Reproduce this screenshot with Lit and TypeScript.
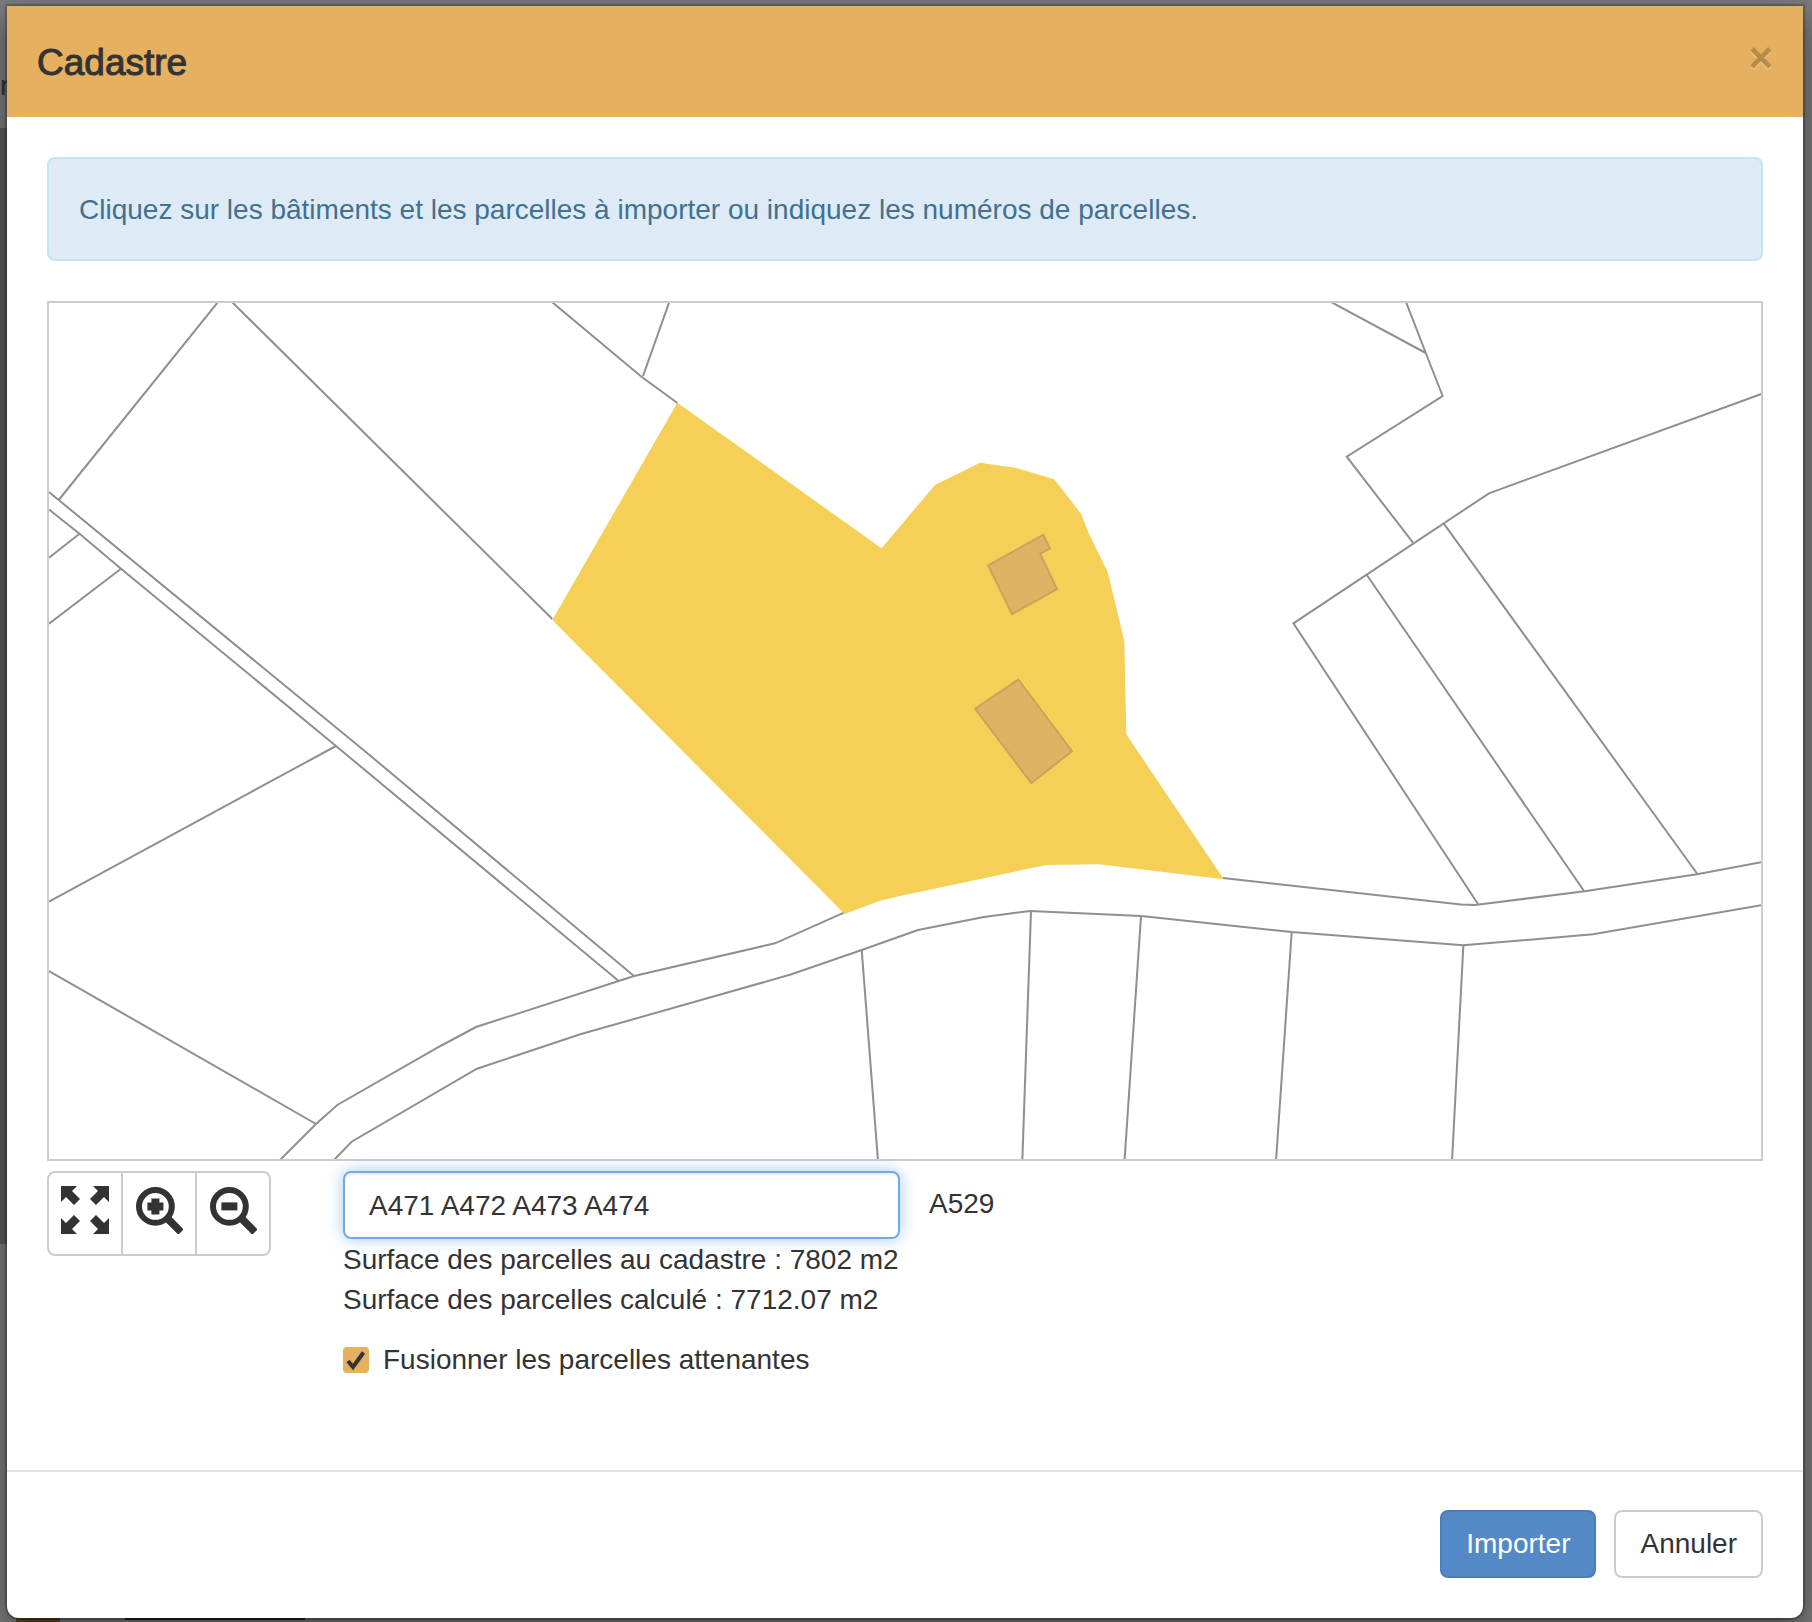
import { LitElement, html, svg, css } from "lit";
import { customElement, state } from "lit/decorators.js";

/** Parcel boundaries, in map units. */
const BOUNDARIES: string[] = [
  "218,301 58.7,499",
  "232,301 552.3,618",
  "552,301 641.8,376 677.4,402",
  "669.3,301 643,375",
  "49,491 58.7,499 364.7,750 634,975",
  "49,508.5 79.5,532.7 121,567.7 336,745 618.7,980",
  "79.5,532.7 49,556.7",
  "121,567.7 49,622.7",
  "336,745 49,900.7",
  "49,970 316,1123",
  "279,1160 316,1123 337.3,1104 440.5,1045 476,1026 618.7,980 634,975 775,942.3 844,911.7",
  "333,1160 351.6,1140.7 477,1067.7 580.3,1033.3 791.5,973.3 861.7,949 918,929 984,916 1030,910 1141.3,915 1291.7,931 1463,944.3 1593,933.3 1762,904",
  "861.7,949 878,1160",
  "1031,910 1022.3,1160",
  "1141,915 1124.5,1160",
  "1291.7,931 1276,1160",
  "1463.4,944 1452,1160",
  "1223,877 1461,903.5 1475,904 1584.6,890.3 1697,873.3 1762,861",
  "1478,903 1293.4,622.3 1489,492.3 1762,392.7",
  "1367,574.3 1584,890",
  "1443.8,522.7 1697.4,873",
  "1331,301 1425.8,352",
  "1406,301 1425.8,352 1442.6,395 1346.7,455.7 1413,541.7",
];

const SELECTED_PARCEL =
  "677.4,401.7 881.5,547.3 935,484 980,461.7 1015,466.7 1054.3,478.3 1081,512.7 1089,532.7 1107.7,571 1124.3,640 1126.3,733.3 1223.8,878.3 1099,863.3 1046,864 900,895 879.3,900 844.7,913 552.3,619";

const BUILDINGS: string[] = [
  "1043.3,533.8 1049.8,547.3 1040.2,553 1057,588 1012,613 988.2,564.3",
  "1018.3,678.5 1072,750.3 1031.3,782 975.2,707.7",
];

@customElement("parcel-map")
class ParcelMap extends LitElement {
  static styles = css`
    :host {
      display: block;
      border: 2px solid #ccc;
    }
    .map {
      display: block;
      width: 100%;
      height: auto;
    }
    .boundary {
      fill: none;
      stroke: #8f8f8f;
      stroke-width: 2;
    }
    .parcel {
      fill: #f6cf57;
    }
    .building {
      fill: #e0b263;
      stroke: #cba25c;
      stroke-width: 2;
    }
  `;

  render() {
    return html`
      <svg class="map" viewBox="49 302 1712 856" role="img" aria-label="Plan cadastral">
        ${BOUNDARIES.map((p) => svg`<polyline class="boundary" points=${p} />`)}
        <polygon class="parcel" points=${SELECTED_PARCEL} />
        ${BUILDINGS.map((p) => svg`<polygon class="building" points=${p} />`)}
      </svg>
    `;
  }
}

const fullscreenIcon = svg`
  <path d="M0 0H16L11 5L19 13L13 19L5 11L0 16Z" />
  <path d="M48 0H32L37 5L29 13L35 19L43 11L48 16Z" />
  <path d="M0 48H16L11 43L19 35L13 29L5 37L0 32Z" />
  <path d="M48 48H32L37 43L29 35L35 29L43 37L48 32Z" />`;

const lens = svg`
  <circle cx="20.400" cy="20.400" r="16.400" fill="none" stroke="currentColor" stroke-width="6" />
  <path d="M32 32L46 46" stroke="currentColor" stroke-width="7.600" />`;

const zoomInIcon = svg`${lens}<path d="M16.400 12.400H24.400V16.400H28.400V24.400H24.400V28.400H16.400V24.400H12.400V16.400H16.400Z" />`;
const zoomOutIcon = svg`${lens}<path d="M12.400 16.400H28.400V24.400H12.400Z" />`;

@customElement("app-root")
class AppRoot extends LitElement {
  static styles = css`
    :host {
      display: block;
      position: relative;
      box-sizing: border-box;
      min-height: 100vh;
      padding: 6px 9px 5px 7px;
      overflow: hidden;
      background:
        linear-gradient(#5f461f, #5f461f) 16px 100% / 44px 5px no-repeat,
        linear-gradient(#2a2a2a, #2a2a2a) 125px calc(100% - 3px) / 180px 2px no-repeat,
        linear-gradient(#5c5c5c, #5c5c5c) 0 128px / 7px 1116px no-repeat,
        #7c7c7c;
      color: #333;
      font: 28px/40px "Liberation Sans", Arial, sans-serif;
    }
    .behind {
      position: absolute;
      top: 66px;
      left: 0;
      color: #333;
    }
    .dialog {
      position: relative;
      border-radius: 0 0 12px 12px;
      background: #fff;
      box-shadow: 0 0 0 2px rgba(0, 0, 0, 0.2), 0 10px 30px rgba(0, 0, 0, 0.5);
    }
    .header {
      display: flex;
      align-items: flex-start;
      justify-content: space-between;
      padding: 31px 30px 29px;
      background: #e5b05f;
    }
    .title {
      margin: 0;
      font-size: 37px;
      line-height: 51px;
      font-weight: 500;
      -webkit-text-stroke: 1px #333;
    }
    .close {
      padding: 0;
      border: 0;
      background: none;
      color: #000;
      font: bold 42px/42px "Liberation Sans", Arial, sans-serif;
      text-shadow: 0 2px 0 #fff;
      opacity: 0.2;
    }
    .body {
      padding: 40px 40px 90px;
    }
    .alert {
      margin-bottom: 40px;
      padding: 31px 30px 29px;
      border: 2px solid #c3e6ee;
      border-radius: 8px;
      background: #deebf6;
      color: #42708f;
    }
    .controls {
      display: flex;
      align-items: flex-start;
      margin-top: 10px;
    }
    .tools {
      display: flex;
      margin-right: 72px;
    }
    .tool {
      display: flex;
      padding: 13px 12px 20px;
      border: 2px solid #ccc;
      background: #fff;
      color: #333;
    }
    .tool + .tool {
      margin-left: -2px;
    }
    .tool:first-child {
      border-radius: 8px 0 0 8px;
    }
    .tool:last-child {
      border-radius: 0 8px 8px 0;
    }
    .icon {
      width: 48px;
      height: 48px;
      fill: currentColor;
    }
    .parcels {
      display: flex;
      flex-direction: column;
    }
    .field {
      box-sizing: border-box;
      width: 557px;
      height: 68px;
      margin-bottom: 1px;
      padding: 13px 24px 11px;
      border: 2px solid #73aae6;
      border-radius: 8px;
      outline: 0;
      background: #fff;
      color: #333;
      font: inherit;
      box-shadow: inset 0 2px 2px rgba(0, 0, 0, 0.075), 0 0 16px rgba(102, 165, 233, 0.6);
    }
    .merge {
      display: flex;
      align-items: center;
      gap: 14px;
      margin-top: 20px;
    }
    .check {
      display: grid;
      place-items: center;
      width: 26px;
      height: 26px;
      margin: 0;
      border-radius: 4px;
      appearance: none;
      background: #e5b05f;
    }
    .box {
      display: grid;
    }
    .box > * {
      grid-area: 1 / 1;
    }
    .tick {
      width: 26px;
      height: 26px;
      fill: none;
      stroke: #333;
      stroke-width: 4;
      pointer-events: none;
    }
    .check:not(:checked) + .tick {
      visibility: hidden;
    }
    .hint {
      margin-left: 29px;
      padding-top: 13px;
    }
    .footer {
      display: flex;
      justify-content: flex-end;
      gap: 18px;
      padding: 38px 40px 40px;
      border-top: 2px solid #e5e5e5;
    }
    .button {
      padding: 12px 24px;
      border: 2px solid #ccc;
      border-radius: 8px;
      background: #fff;
      color: #333;
      font: inherit;
    }
    .primary {
      border-color: #4a7dbd;
      background: #5489c5;
      color: #fff;
    }
  `;

  @state() private parcels = "A471 A472 A473 A474";
  @state() private merge = true;

  render() {
    return html`
      <span class="behind" aria-hidden="true">r</span>
      <div class="dialog" role="dialog" aria-labelledby="title">
        <header class="header">
          <h4 class="title" id="title">Cadastre</h4>
          <button class="close" type="button" aria-label="Fermer">×</button>
        </header>
        <main class="body">
          <div class="alert">
            Cliquez sur les bâtiments et les parcelles à importer ou indiquez les numéros de parcelles.
          </div>
          <parcel-map></parcel-map>
          <div class="controls">
            <div class="tools">
              <button class="tool" type="button" aria-label="Plein écran">
                <svg class="icon" viewBox="0 0 48 48">${fullscreenIcon}</svg>
              </button>
              <button class="tool" type="button" aria-label="Zoom avant">
                <svg class="icon" viewBox="0 0 48 48">${zoomInIcon}</svg>
              </button>
              <button class="tool" type="button" aria-label="Zoom arrière">
                <svg class="icon" viewBox="0 0 48 48">${zoomOutIcon}</svg>
              </button>
            </div>
            <div class="parcels">
              <input
                class="field"
                type="text"
                aria-label="Numéros de parcelles"
                .value=${this.parcels}
                @input=${(e: Event) => (this.parcels = (e.target as HTMLInputElement).value)}
              />
              <div>Surface des parcelles au cadastre : 7802 m2</div>
              <div>Surface des parcelles calculé : 7712.07 m2</div>
              <label class="merge">
                <span class="box">
                  <input
                    class="check"
                    type="checkbox"
                    .checked=${this.merge}
                    @change=${(e: Event) => (this.merge = (e.target as HTMLInputElement).checked)}
                  />
                  <svg class="tick" viewBox="0 0 26 26"><path d="M5 14L10 20L20.500 5.500" /></svg>
                </span>
                Fusionner les parcelles attenantes
              </label>
            </div>
            <div class="hint">A529</div>
          </div>
        </main>
        <footer class="footer">
          <button class="button primary" type="button">Importer</button>
          <button class="button" type="button">Annuler</button>
        </footer>
      </div>
    `;
  }
}
